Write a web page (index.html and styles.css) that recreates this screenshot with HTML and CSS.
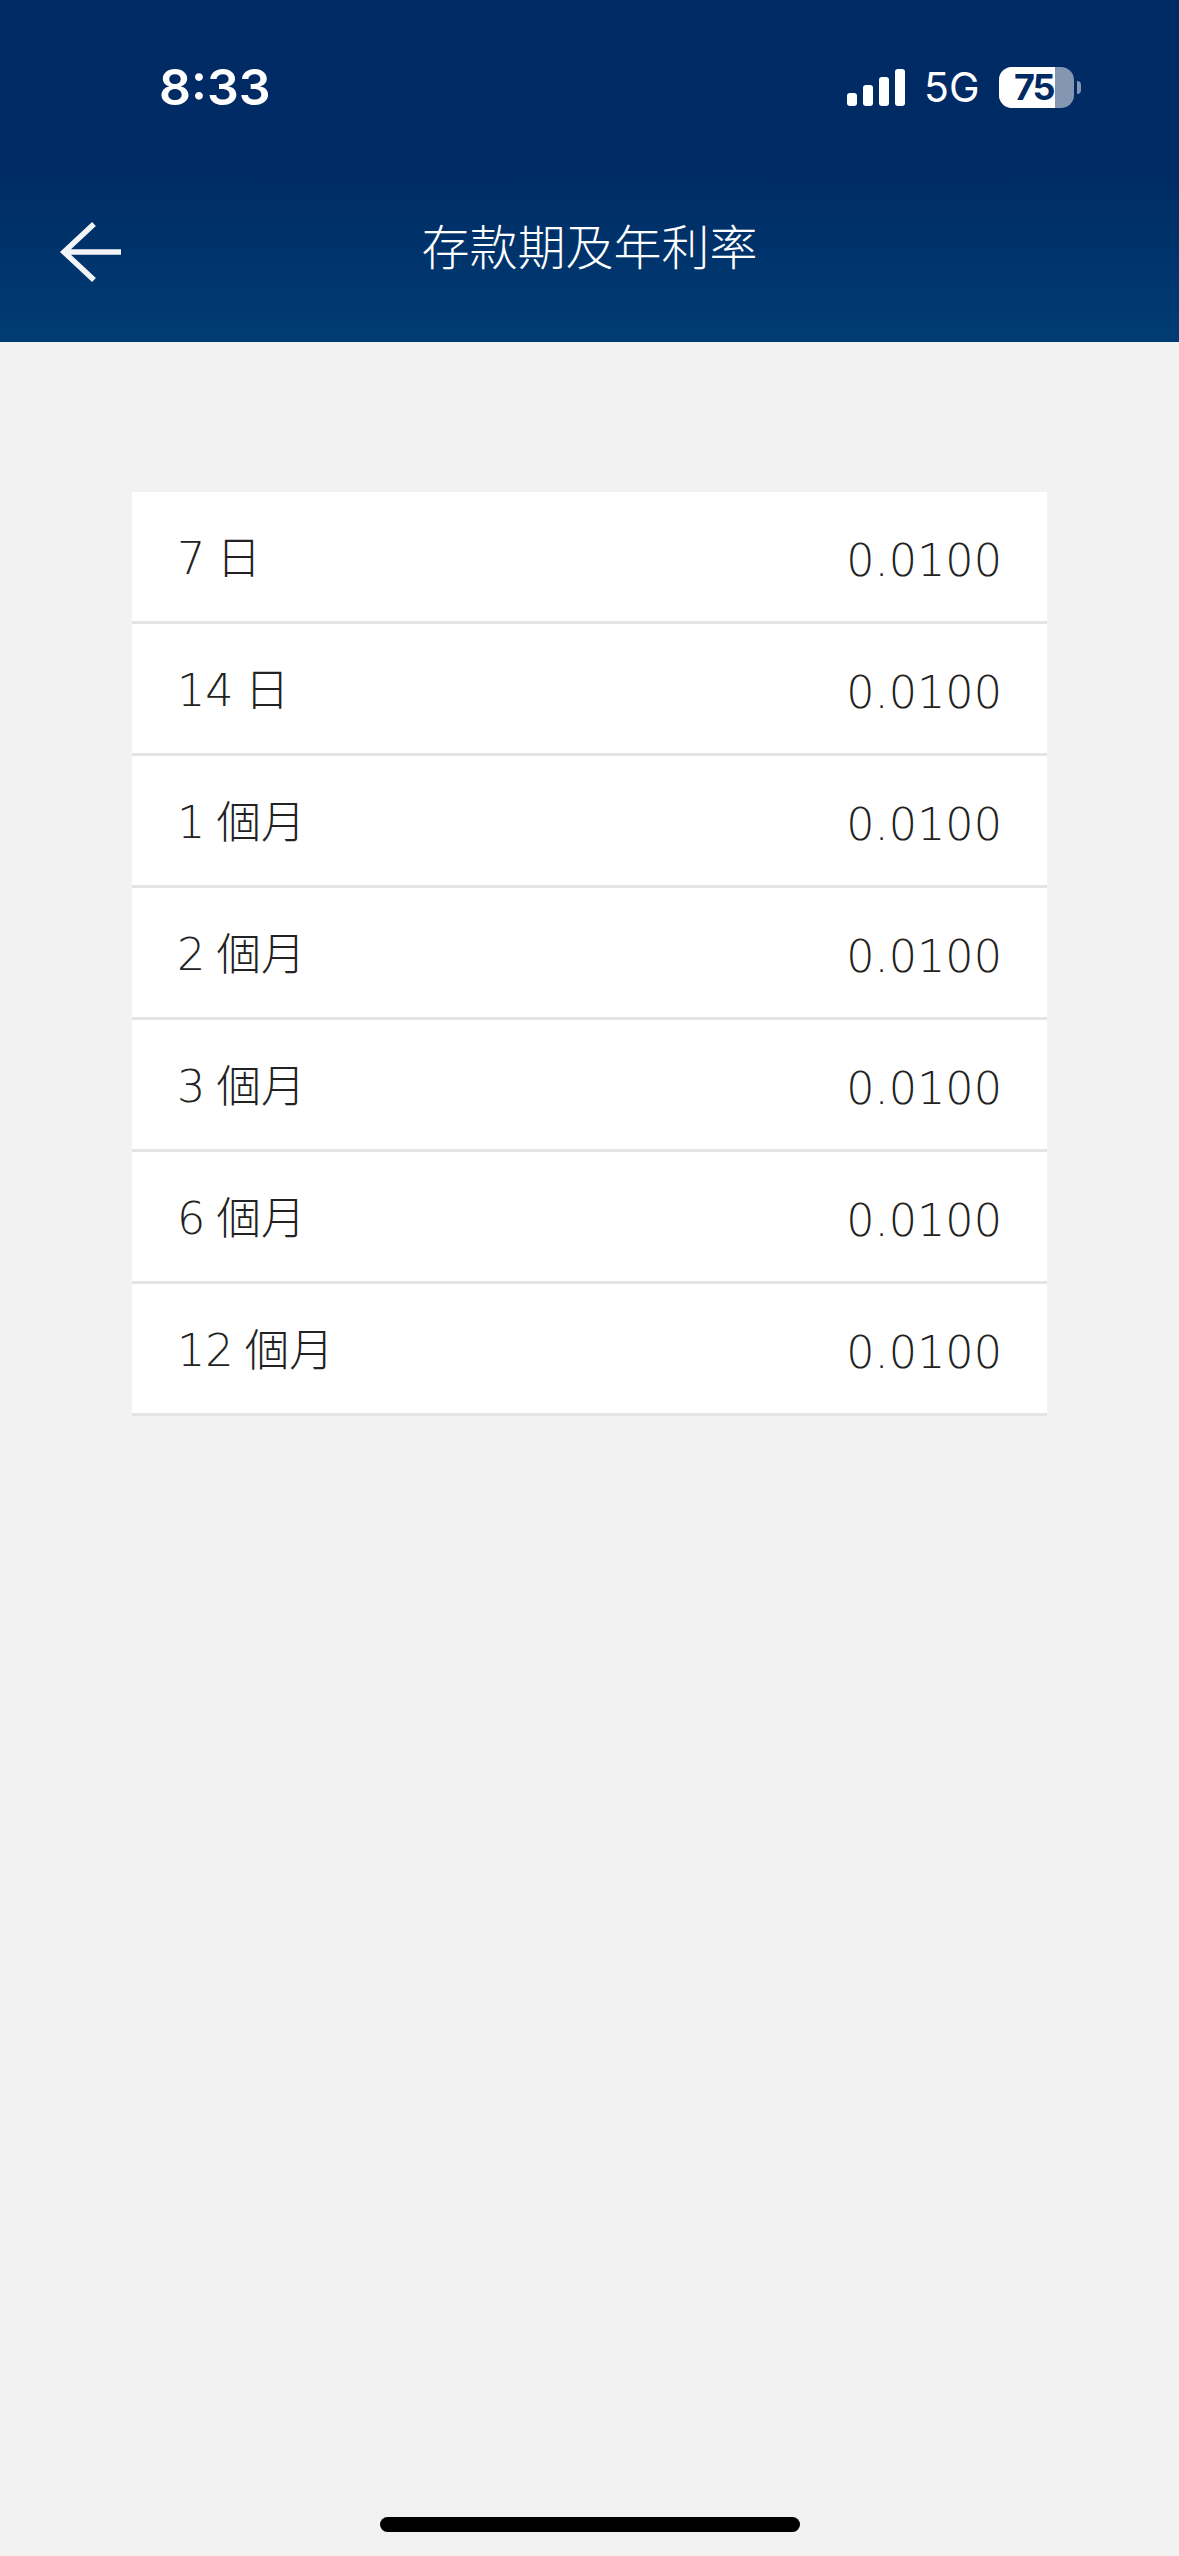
FILE: index.html
```html
<!DOCTYPE html>
<html lang="zh-Hant">
<head>
    <meta charset="UTF-8">
    <meta name="viewport" content="width=device-width, initial-scale=1.0">
    <title>存款期及年利率</title>
    <link rel="stylesheet" href="styles.css">
</head>
<body>
    <div class="page">
        <header class="header">
            <div class="status">
                <span class="time">8:33</span>
                <div class="status-right">
                    <svg class="signal" width="58" height="37" viewBox="0 0 58 37">
                        <rect x="0" y="24" width="10" height="13" rx="3" fill="#fff"/>
                        <rect x="16" y="16" width="10" height="21" rx="3" fill="#fff"/>
                        <rect x="32" y="8" width="10" height="29" rx="3" fill="#fff"/>
                        <rect x="48" y="0" width="10" height="37" rx="3" fill="#fff"/>
                    </svg>
                    <span class="net">5G</span>
                    <div class="battery">
                        <div class="battery-body">
                            <div class="battery-fill"></div>
                            <span class="battery-num">75</span>
                        </div>
                        <div class="battery-nub"></div>
                    </div>
                </div>
            </div>
            <div class="nav">
                <svg class="back" width="62" height="64" viewBox="0 0 62 64">
                    <path d="M35 4 L5 32 L35 60 M5 32 H62" fill="none" stroke="#fff" stroke-width="5.5" opacity="0.95"/>
                </svg>
                <h1 class="title">存款期及年利率</h1>
            </div>
        </header>

        <main class="content">
            <div class="rates">
                <div class="row"><span class="term">7 日</span><span class="rate">0.0100</span></div>
                <div class="row"><span class="term">14 日</span><span class="rate">0.0100</span></div>
                <div class="row"><span class="term">1 個月</span><span class="rate">0.0100</span></div>
                <div class="row"><span class="term">2 個月</span><span class="rate">0.0100</span></div>
                <div class="row"><span class="term">3 個月</span><span class="rate">0.0100</span></div>
                <div class="row"><span class="term">6 個月</span><span class="rate">0.0100</span></div>
                <div class="row"><span class="term">12 個月</span><span class="rate">0.0100</span></div>
            </div>
        </main>

        <div class="home-bar"></div>
    </div>
</body>
</html>
```

FILE: styles.css
```css
body {
    margin: 0;
    background-color: #f2f2f2;
    font-family: "DejaVu Sans", "Noto Sans CJK TC", sans-serif;
}

.page {
    display: flex;
    flex-direction: column;
    height: 2556px;
    overflow: hidden;
}

.header {
    height: 342px;
    background: linear-gradient(to bottom, #002a63 0%, #002b64 50%, #003c73 100%);
    color: #fff;
}

.status {
    display: flex;
    justify-content: space-between;
    align-items: center;
    height: 60px;
    padding: 57px 98px 0 159px;
}

.time {
    font-family: Inter, sans-serif;
    font-size: 50px;
    font-weight: 600;
    line-height: 60px;
}

.status-right {
    display: flex;
    align-items: center;
}

.net {
    font-family: Inter, sans-serif;
    font-size: 41px;
    line-height: 50px;
    margin-left: 19px;
    width: 75px;
}

.battery {
    display: flex;
    align-items: center;
}

.battery-body {
    position: relative;
    width: 75px;
    height: 41px;
    border-radius: 13px;
    background-color: #8496b2;
}

.battery-fill {
    width: 56px;
    height: 41px;
    border-radius: 13px 0 0 13px;
    background-color: #fff;
}

.battery-num {
    position: absolute;
    top: 0;
    left: 15px;
    font-family: Inter, sans-serif;
    font-size: 36px;
    font-weight: 700;
    letter-spacing: -2px;
    line-height: 41px;
    color: #002a63;
}

.battery-nub {
    width: 4px;
    height: 13px;
    margin-left: 3px;
    border-radius: 0 6px 6px 0;
    background-color: #8496b2;
}

.nav {
    position: relative;
    display: flex;
    justify-content: center;
    align-items: center;
    margin-top: 92px;
    height: 70px;
}

.back {
    position: absolute;
    left: 59px;
    top: 11px;
}

.title {
    margin: 0;
    font-family: "Noto Sans CJK TC", sans-serif;
    font-size: 48px;
    font-weight: 300;
    line-height: 70px;
}

.content {
    padding: 150px 132px 0;
}

.rates {
    background-color: #fff;
}

.row {
    display: flex;
    justify-content: space-between;
    align-items: center;
    box-sizing: border-box;
    height: 132px;
    padding: 0 45px;
    border-bottom: 3px solid #e4e4e4;
    color: #222;
    font-size: 44.5px;
    font-weight: 300;
}

.term {
    margin-top: -4px;
    word-spacing: -3px;
}

.rate {
    margin-top: 7px;
}

.home-bar {
    width: 420px;
    height: 15px;
    margin: auto auto 24px;
    border-radius: 8px;
    background-color: #000;
}
```
